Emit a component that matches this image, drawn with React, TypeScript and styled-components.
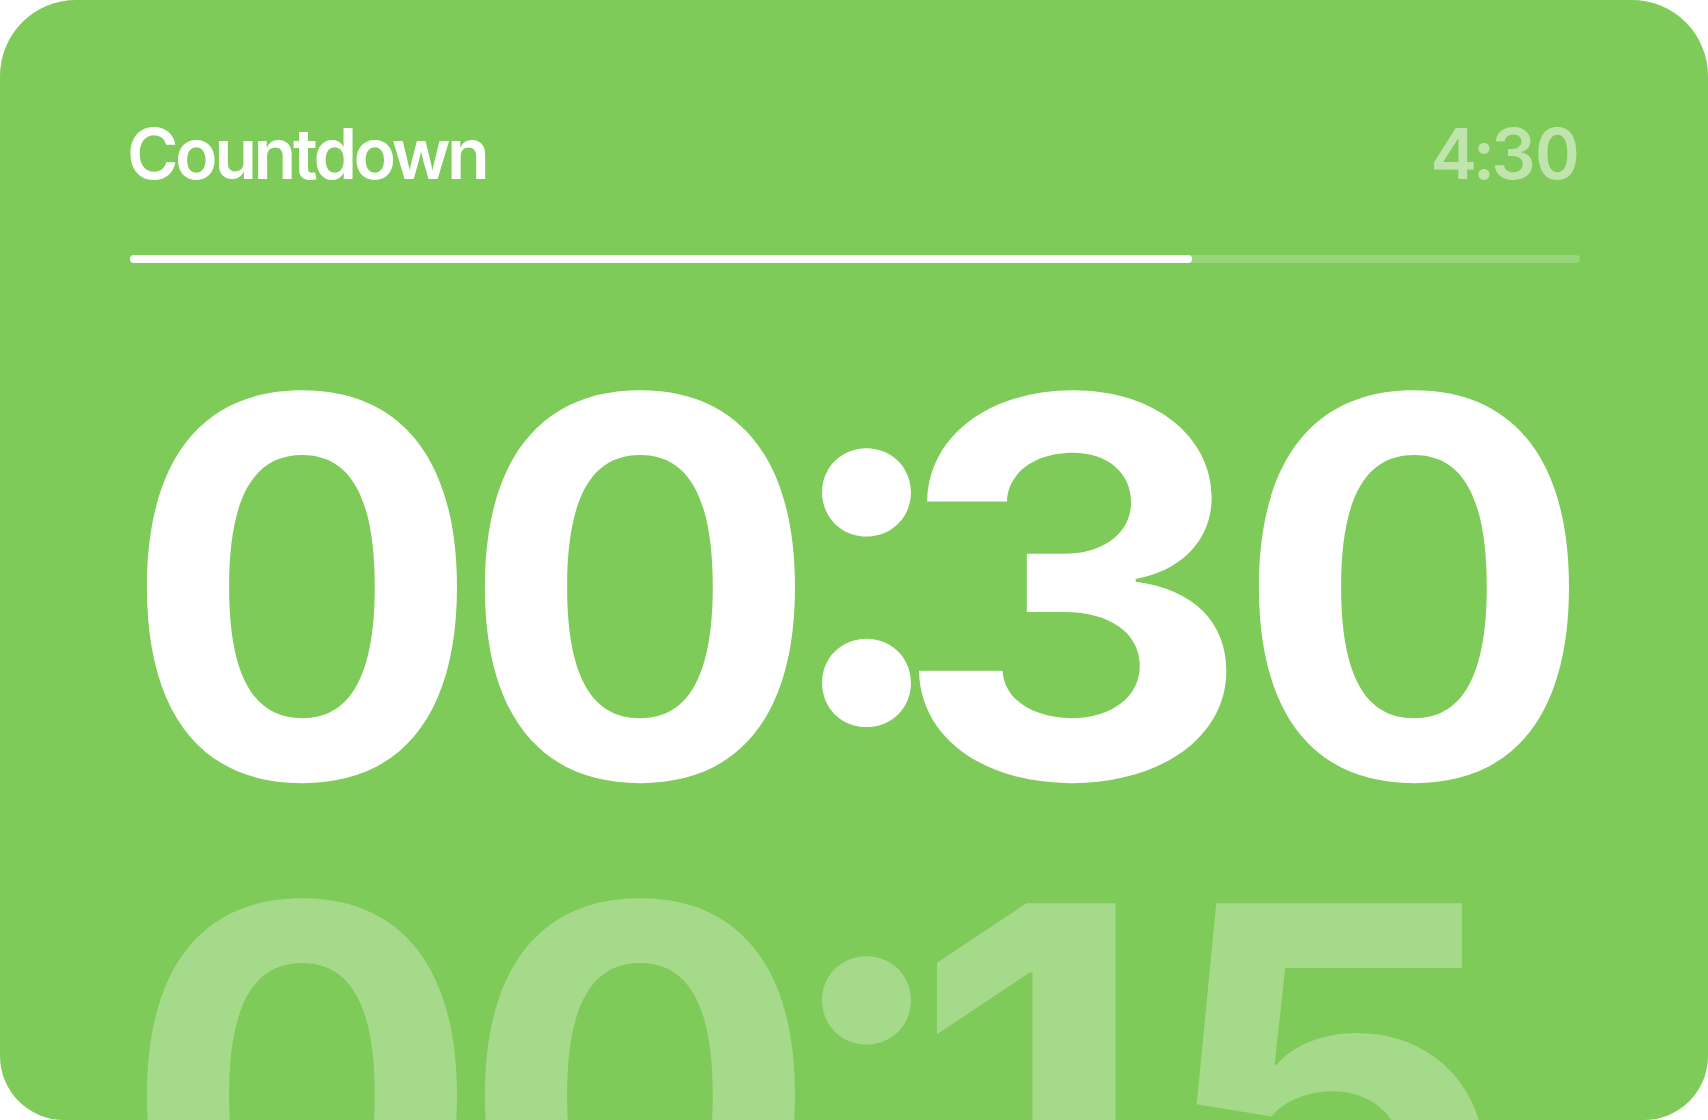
import React from "react";
import styled, { createGlobalStyle } from "styled-components";

const GlobalStyle = createGlobalStyle`
  html, body {
    margin: 0;
    padding: 0;
    background: #ffffff;
  }
  body {
    font-family: Inter, "Noto Sans", "Liberation Sans", sans-serif;
  }
  * { box-sizing: border-box; }
`;

const Card = styled.main`
  width: 1708px;
  height: 1120px;
  border-radius: 76px 76px 64px 64px;
  background: #7fcb5a;
  overflow: hidden;
  padding: 119px 128px 0 130px;
  display: flex;
  flex-direction: column;
  & > * {
    flex-shrink: 0;
  }
`;

const Header = styled.header`
  display: flex;
  justify-content: space-between;
  align-items: baseline;
  height: 70px;
`;

const Title = styled.h1`
  margin: 0 0 0 -3px;
  font-size: 70px;
  line-height: 70px;
  font-weight: 600;
  color: #ffffff;
  letter-spacing: -3.5px;
`;

const Remaining = styled.span`
  font-size: 70px;
  line-height: 70px;
  font-weight: 600;
  color: rgba(255, 255, 255, 0.5);
  font-variant-numeric: tabular-nums;
  letter-spacing: -2px;
  margin-right: 2px;
`;

const Track = styled.div`
  margin-top: 66px;
  height: 8px;
  border-radius: 4px;
  background: rgba(255, 255, 255, 0.2);
  display: flex;
`;

const Fill = styled.div`
  height: 100%;
  border-radius: 4px;
  background: #ffffff;
`;

const Times = styled.div`
  margin-top: 70px;
  display: flex;
  flex-direction: column;
`;

const BigTime = styled.div<{ $faded?: boolean }>`
  display: flex;
  margin-left: 2px;
  font-size: 526px;
  line-height: 508px;
  font-weight: 700;
  white-space: nowrap;
  font-variant-numeric: tabular-nums;
  color: ${(p) => (p.$faded ? "rgba(255, 255, 255, 0.3)" : "#ffffff")};
`;

const Digit = styled.span<{ $narrow?: boolean }>`
  width: ${(p) => (p.$narrow ? "280px" : "338px")};
  margin-left: ${(p) => (p.$narrow ? "-20px" : "0")};
  text-align: center;
  transform: scaleX(1.06);
`;

const Separator = styled.span`
  width: 98px;
  margin-top: -8px;
  padding-left: 18px;
  display: flex;
  justify-content: center;
  font-feature-settings: "case" 1;
`;

function Clock({ value, faded }: { value: string; faded?: boolean }) {
  return (
    <BigTime $faded={faded}>
      {value.split("").map((ch, i) =>
        ch === ":" ? (
          <Separator key={i}>:</Separator>
        ) : (
          <Digit key={i} $narrow={ch === "1"}>
            {ch}
          </Digit>
        )
      )}
    </BigTime>
  );
}

export default function App() {
  const progress = 1063 / 1451;
  return (
    <>
      <GlobalStyle />
      <Card>
        <Header>
          <Title>Countdown</Title>
          <Remaining>4:30</Remaining>
        </Header>
        <Track>
          <Fill style={{ width: `${progress * 100}%` }} />
        </Track>
        <Times>
          <Clock value="00:30" />
          <Clock value="00:15" faded />
        </Times>
      </Card>
    </>
  );
}
